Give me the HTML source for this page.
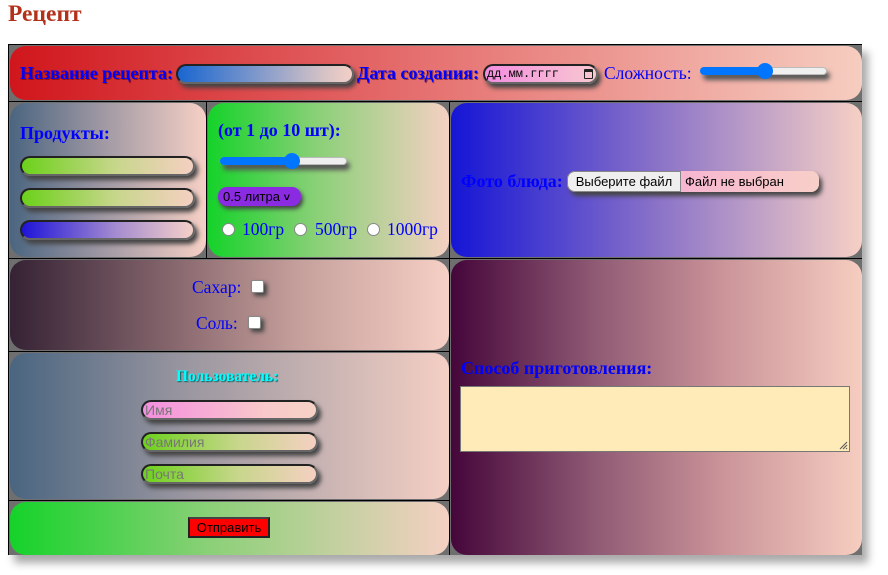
<!DOCTYPE html>
<html><head><meta charset="utf-8">
<style>
*{box-sizing:border-box;margin:0;padding:0}
body{width:888px;height:575px;background:#fff;position:relative;font-family:"Liberation Serif",serif;overflow:hidden}
.a{position:absolute}
h1{position:absolute;left:8px;top:1px;font-size:23.5px;font-weight:bold;color:#b3301a;}
.tbl{position:absolute;left:8px;top:44px;width:854px;height:511px;border:1px solid #000;background:#777;box-shadow:6px 8px 8px #aaa}
.cell{position:absolute;border-right:1px solid #000;border-bottom:1px solid #000;background:#6f6f6f}
.in{position:absolute;left:1px;top:1px;right:0;bottom:1px;border-radius:16px}
.lb{position:absolute;font-weight:bold;color:#00f;font-size:18px;white-space:nowrap}
.tx{position:absolute;color:#00f;font-size:17.5px;white-space:nowrap}
.pill{position:absolute;height:20px;border-radius:10px;border:2px solid #222;border-right-color:#666;border-bottom-color:#666;box-shadow:3px 4px 5px #444}
.ph{position:absolute;left:2px;top:0;font-family:"Liberation Sans",sans-serif;font-size:14px;color:#777;line-height:16px}
.sl{position:absolute;height:8px;border-radius:4px;background:#efefef;border:1px solid #bbb;box-shadow:3px 5px 5px #555}
.sl i{position:absolute;left:-1px;top:-1px;height:8px;border-radius:4px;background:#0075ff}
.sl b{position:absolute;width:16px;height:16px;border-radius:50%;background:#0075ff;top:-5px}
.rad{position:absolute;width:13px;height:13px;border-radius:50%;background:#fff;border:1px solid #888}
.cb{position:absolute;width:13px;height:13px;border-radius:2px;background:#fff;border:1px solid #888;box-shadow:3px 3px 4px #444}
</style></head><body>
<h1>Рецепт</h1>
<div class="tbl">
 <div class="cell" style="left:0;top:0;width:853px;height:57px;border-right:none">
  <div class="in" style="background:linear-gradient(90deg,#d0161c,#e46a6a 45%,#f6cdc0)"></div>
 </div>
 <div class="cell" style="left:0;top:57px;width:198px;height:157px">
  <div class="in" style="background:linear-gradient(90deg,#4b6580,#9c96a2 45%,#f6d0c5)"></div>
 </div>
 <div class="cell" style="left:198px;top:57px;width:243px;height:157px">
  <div class="in" style="background:linear-gradient(90deg,#15d22a,#8ad077 45%,#f5d0c3)"></div>
 </div>
 <div class="cell" style="left:441px;top:57px;width:412px;height:157px;border-right:none">
  <div class="in" style="background:linear-gradient(90deg,#1515d5,#8a72c8 50%,#f6d0c5)"></div>
 </div>
 <div class="cell" style="left:0;top:214px;width:441px;height:93px">
  <div class="in" style="background:linear-gradient(90deg,#352234,#8d6c72 40%,#c49e9a 65%,#f6d0c5)"></div>
 </div>
 <div class="cell" style="left:0;top:307px;width:441px;height:149px">
  <div class="in" style="background:linear-gradient(90deg,#4a6580,#9a96a0 40%,#f4cfc4)"></div>
 </div>
 <div class="cell" style="left:0;top:456px;width:441px;height:54px;border-bottom:none">
  <div class="in" style="bottom:0;background:linear-gradient(90deg,#15d22a,#8ad077 45%,#f5d0c3)"></div>
 </div>
 <div class="cell" style="left:441px;top:214px;width:412px;height:296px;border-right:none;border-bottom:none">
  <div class="in" style="bottom:0;background:linear-gradient(90deg,#45063a,#8f5a74 35%,#c99298 65%,#f6cdc0)"></div>
 </div>
</div>

<div class="lb" style="left:20px;top:63px;text-shadow:1px 1px 0 rgba(80,0,0,.5)">Название рецепта:</div>
<div class="pill" style="left:176px;top:64px;width:178px;background:linear-gradient(90deg,#1a66d0,#d8c4c6 85%,#f3cfc7)"></div>
<div class="lb" style="left:357px;top:63px;text-shadow:1px 1px 0 rgba(80,0,0,.5)">Дата создания:</div>
<div class="pill" style="left:483px;top:64px;width:115px;background:linear-gradient(90deg,#f38ee0,#f8c8d0)"><span style="position:absolute;left:2px;top:0;font-family:'Liberation Mono',monospace;font-size:12px;line-height:16px;color:#000">дд.мм.гггг</span><span style="position:absolute;right:3px;top:3px;width:9px;height:10px;border:1.5px solid #222;border-top-width:3px;border-radius:1px"></span></div>
<div class="tx" style="left:604px;top:63px">Сложность:</div>
<div class="sl" style="left:700px;top:67px;width:127px"><i style="width:66px"></i><b style="left:56px"></b></div>

<div class="lb" style="left:20px;top:123px">Продукты:</div>
<div class="pill" style="left:20px;top:156px;width:175px;background:linear-gradient(90deg,#6cd11a,#c8d68c 55%,#f5d0c2)"></div>
<div class="pill" style="left:20px;top:188px;width:175px;background:linear-gradient(90deg,#6cd11a,#c8d68c 55%,#f5d0c2)"></div>
<div class="pill" style="left:20px;top:220px;width:175px;background:linear-gradient(90deg,#1e14d8,#a58cd0 55%,#f5d0c8)"></div>

<div class="lb" style="left:218px;top:120px">(от 1 до 10 шт):</div>
<div class="sl" style="left:220px;top:157px;width:127px"><i style="width:72px"></i><b style="left:63px"></b></div>
<div class="a" style="left:218px;top:187px;width:83px;height:19px;border-radius:9px;background:#8a2be2;box-shadow:2px 3px 4px #444;font-family:'Liberation Sans',sans-serif;font-size:13px;line-height:19px;padding-left:5px;color:#000">0.5 литра <span style="font-size:11px;font-weight:bold">&#709;</span></div>
<div class="rad" style="left:222px;top:223px"></div><div class="tx" style="left:242px;top:219px">100гр</div>
<div class="rad" style="left:294px;top:223px"></div><div class="tx" style="left:315px;top:219px">500гр</div>
<div class="rad" style="left:367px;top:223px"></div><div class="tx" style="left:387px;top:219px">1000гр</div>

<div class="lb" style="left:461px;top:171px">Фото блюда:</div>
<div class="a" style="left:567px;top:171px;width:252px;height:21px;border-radius:8px;background:linear-gradient(90deg,#f6a0d8,#f8cfc8);box-shadow:3px 4px 5px #444;font-family:'Liberation Sans',sans-serif;font-size:13px;line-height:21px;color:#000"><span style="position:absolute;left:0;top:0;width:114px;height:21px;background:#efefef;border:1px solid #888;border-radius:8px 0 0 8px;text-align:center;line-height:19px">Выберите файл</span><span style="position:absolute;left:118px">Файл не выбран</span></div>

<div class="tx" style="left:192px;top:277px">Сахар:</div><div class="cb" style="left:251px;top:280px"></div>
<div class="tx" style="left:196px;top:313px">Соль:</div><div class="cb" style="left:248px;top:316px"></div>

<div class="lb" style="left:176px;top:368px;color:#0ff;font-size:15.5px;text-shadow:1px 1px 1px #066">Пользователь:</div>
<div class="pill" style="left:141px;top:400px;width:177px;background:linear-gradient(90deg,#f58ee0,#f8c8ca 70%,#f6d2c6)"><span class="ph">Имя</span></div>
<div class="pill" style="left:141px;top:432px;width:177px;background:linear-gradient(90deg,#6cd11a,#c8d68c 55%,#f5d0c2)"><span class="ph">Фамилия</span></div>
<div class="pill" style="left:141px;top:464px;width:177px;background:linear-gradient(90deg,#6cd11a,#c8d68c 55%,#f5d0c2)"><span class="ph">Почта</span></div>

<div class="a" style="left:188px;top:517px;width:82px;height:21px;background:#f00;border:2px solid #222;border-top-color:#444;font-family:'Liberation Sans',sans-serif;font-size:13px;line-height:17px;text-align:center;color:#000">Отправить</div>

<div class="lb" style="left:461px;top:358px">Способ приготовления:</div>
<div class="a" style="left:460px;top:386px;width:390px;height:66px;background:#ffebb8;border:1px solid #777"><svg style="position:absolute;right:1px;bottom:1px" width="9" height="9"><path d="M8 1L1 8M8 4L4 8M8 7L7 8" stroke="#555" stroke-width="1"/></svg></div>
</body></html>
